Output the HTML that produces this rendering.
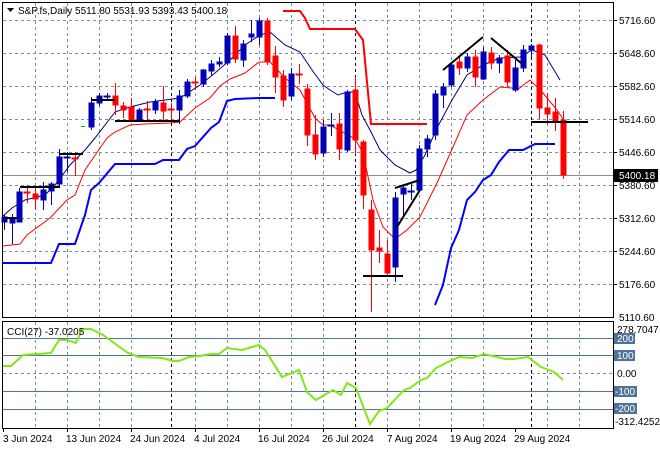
<!DOCTYPE html>
<html><head><meta charset="utf-8"><style>
html,body{margin:0;padding:0;background:#fff;}
svg{display:block;font-family:"Liberation Sans",sans-serif;font-size:10px;}
</style></head><body>
<svg width="660" height="450" viewBox="0 0 660 450" xmlns="http://www.w3.org/2000/svg">
<rect width="660" height="450" fill="#fff"/>
<!-- grid main -->
<g stroke="#7f8c99" stroke-width="1" stroke-dasharray="3,3" fill="none">
<path d="M3 20.5H613M3 53.5H613M3 86.5H613M3 119.5H613M3 152.5H613M3 185.5H613M3 218.5H613M3 251.5H613M3 284.5H613"/>
<path d="M35.5 3V317M67.5 3V317M99.5 3V317M131.5 3V317M195.5 3V317M227.5 3V317M259.5 3V317M291.5 3V317M323.5 3V317M387.5 3V317M419.5 3V317M451.5 3V317M483.5 3V317M547.5 3V317M579.5 3V317"/>
<path d="M35.5 322V428M67.5 322V428M99.5 322V428M131.5 322V428M195.5 322V428M227.5 322V428M259.5 322V428M291.5 322V428M323.5 322V428M387.5 322V428M419.5 322V428M451.5 322V428M483.5 322V428M547.5 322V428M579.5 322V428M3 373.5H613"/>
</g>
<g stroke="#000" stroke-width="1" stroke-dasharray="3,3">
<path d="M171.5 3V317M355.5 3V317M531.5 3V317M171.5 322V428M355.5 322V428M531.5 322V428"/>
</g>
<line x1="3" y1="175.5" x2="613" y2="175.5" stroke="#8a9099"/>
<!-- frames -->
<rect x="2.5" y="2.5" width="611" height="315" fill="none" stroke="#000"/>
<rect x="2.5" y="321.5" width="611" height="107" fill="none" stroke="#000"/>
<!-- CCI levels -->
<path d="M3 338.5H613M3 355.5H613M3 391.5H613M3 409.5H613" stroke="#4f7399" stroke-width="1"/>

<!-- blue channel -->
<polyline fill="none" stroke="#0000ff" stroke-width="2" points="3,263 51,263 59,244 75,244 85,215 91,190 99,183 115,164 155,164 163,160 179,160 187,149 195,146 211,128 219,122 227,101 235,99 259,98 275,98"/>
<polyline fill="none" stroke="#0000ff" stroke-width="2" points="435,305 443,285 451,248 459,230 467,200 475,192 483,180 491,175 499,162 509,150 523,150 531,146 535,144 555,144"/>
<!-- red channel -->
<polyline fill="none" stroke="#ff0000" stroke-width="2" points="283,11 300,11 305,18 310,29 355,29 363,40 371,124 427,124"/>
<!-- red MA -->
<polyline fill="none" stroke="#ff0000" stroke-width="1" points="3,246 20,244 27,235 50,218 67,200 75,195 85,170 100,148 107,138 115,132 130,125 145,124 170,123 180,122 195,108 210,98 220,86 230,79 245,73 259,62 270,62 285,78 300,90 315,118 323,125 330,125 355,139 363,153 373,200 383,227 395,239 407,230 420,217 437,183 453,147 467,115 483,100 500,87 512,88 517,90 530,80 543,93 557,110 565,122"/>
<!-- navy MA -->
<polyline fill="none" stroke="#000080" stroke-width="1" points="3,216 12,208 25,200 45,195 55,185 70,165 85,150 95,138 105,125 115,112 130,107 150,102 165,100 180,98 200,85 215,73 230,60 245,45 260,35 270,32 285,45 300,52 312,70 323,85 330,90 338,95 347,92 355,92 362,115 370,130 380,150 395,165 410,173 416,170 425,155 437,128 452,100 467,75 483,65 500,58 520,57 532,50 545,55 560,80"/>

<!-- candles -->
<g stroke-width="1">
<g stroke="#0000b4" fill="#0000b4">
<path d="M4.5 215V230M12.5 214V244M19.5 188V222M43.5 182V210M51.5 182V205M59.5 149V186M67.5 152V172M91.5 97V130M99.5 93V106M107.5 93V99M139.5 108V120M155.5 99V114M179.5 90V124M187.5 79V98M203.5 69V87M211.5 60V76M219.5 57V67M227.5 33V65M243.5 40V67M251.5 20V42M259.5 18V45M291.5 68V100M323.5 120V157M331.5 113V136M347.5 90V152M395.5 192V282M403.5 184V215M411.5 184V200M419.5 145V192M427.5 135V157M435.5 90V140M443.5 83V108M451.5 63V87M467.5 53V72M483.5 47V80M499.5 55V73M515.5 60V92M523.5 45V72M531.5 44V57"/>
<rect x="2" y="217" width="5" height="5"/><rect x="10" y="219" width="5" height="4"/><rect x="17" y="192" width="5" height="30"/><rect x="41" y="190" width="5" height="10"/><rect x="49" y="184" width="5" height="7"/><rect x="57" y="157" width="5" height="27"/><rect x="64" y="157" width="6" height="1"/><rect x="89" y="103" width="5" height="24"/><rect x="97" y="96" width="5" height="7"/><rect x="104" y="96" width="6" height="1"/><rect x="137" y="110" width="5" height="10"/><rect x="153" y="102" width="5" height="8"/><rect x="177" y="96" width="5" height="14"/><rect x="185" y="82" width="5" height="14"/><rect x="201" y="70" width="5" height="14"/><rect x="209" y="64" width="5" height="7"/><rect x="217" y="62" width="5" height="2"/><rect x="225" y="36" width="5" height="27"/><rect x="241" y="44" width="5" height="16"/><rect x="249" y="34" width="5" height="3"/><rect x="257" y="21" width="5" height="16"/><rect x="289" y="74" width="5" height="22"/><rect x="321" y="127" width="5" height="26"/><rect x="328" y="125" width="6" height="1"/><rect x="345" y="92" width="5" height="58"/><rect x="393" y="198" width="5" height="69"/><rect x="401" y="188" width="5" height="6"/><rect x="408" y="191" width="6" height="1"/><rect x="417" y="149" width="5" height="41"/><rect x="425" y="139" width="5" height="10"/><rect x="433" y="94" width="5" height="41"/><rect x="441" y="87" width="5" height="8"/><rect x="449" y="65" width="5" height="20"/><rect x="465" y="57" width="5" height="11"/><rect x="481" y="52" width="5" height="27"/><rect x="497" y="58" width="5" height="5"/><rect x="513" y="68" width="5" height="22"/><rect x="521" y="50" width="5" height="18"/><rect x="529" y="46" width="5" height="4"/>
</g>
<g stroke="#ff0000" fill="#ff0000">
<path d="M27.5 188V203M35.5 188V210M75.5 152V176M115.5 83V115M123.5 102V118M131.5 98V122M147.5 101V120M163.5 86V122M171.5 103V123M195.5 77V90M235.5 26V63M267.5 18V65M275.5 46V93M283.5 70V107M299.5 64V84M307.5 84V146M315.5 115V160M339.5 113V160M355.5 77V155M363.5 140V209M371.5 200V312M379.5 230V263M387.5 240V276M459.5 55V75M475.5 50V87M491.5 47V69M507.5 50V87M539.5 44V119M547.5 93V124M555.5 98V131M563.5 111V179"/>
<rect x="24" y="192" width="6" height="1"/><rect x="33" y="194" width="5" height="5"/><rect x="72" y="158" width="6" height="1"/><rect x="113" y="96" width="5" height="9"/><rect x="121" y="106" width="5" height="4"/><rect x="129" y="107" width="5" height="13"/><rect x="144" y="109" width="6" height="1"/><rect x="161" y="103" width="5" height="8"/><rect x="168" y="109" width="6" height="1"/><rect x="192" y="82" width="6" height="1"/><rect x="233" y="36" width="5" height="23"/><rect x="265" y="21" width="5" height="40"/><rect x="273" y="56" width="5" height="21"/><rect x="281" y="76" width="5" height="24"/><rect x="296" y="74" width="6" height="1"/><rect x="305" y="89" width="5" height="46"/><rect x="313" y="135" width="5" height="19"/><rect x="337" y="124" width="5" height="25"/><rect x="353" y="90" width="5" height="50"/><rect x="361" y="142" width="5" height="53"/><rect x="369" y="210" width="5" height="40"/><rect x="377" y="248" width="5" height="3"/><rect x="385" y="254" width="5" height="19"/><rect x="457" y="62" width="5" height="6"/><rect x="473" y="57" width="5" height="20"/><rect x="489" y="53" width="5" height="10"/><rect x="505" y="56" width="5" height="26"/><rect x="537" y="45" width="5" height="63"/><rect x="545" y="108" width="5" height="6"/><rect x="553" y="112" width="5" height="9"/><rect x="561" y="120" width="5" height="55"/>
</g>
<path d="M81 126.5H85" stroke="#00c000"/>
</g>
<!-- black lines -->
<g stroke="#000" stroke-width="2" fill="none">
<path d="M3 218H17M20 187H60M59 154H83M91 100H115M115 121H180M363 276H403M397 227L420 190M395 188L420 180M443 70L483 37M491 38L521 63M531 122H588"/>
</g>

<!-- CCI line -->
<polyline fill="none" stroke="#7fe817" stroke-width="2" points="3,366 11,366 23,355 51,353 59,340 67,340 76,343 82,329 91,329 103,335 114,343 128,353 139,357 162,358 173,361 179,361 189,357 200,356 210,354 219,354 227,348 242,350 259,345 265,350 282,377 299,370 307,392 316,400 333,390 341,395 347,383 356,388 370,424 379,411 387,408 404,390 410,388 421,380 427,378 436,368 446,363 459,357 472,358 484,354 505,359 514,359 528,357 541,367 554,372 563,380"/>

<!-- header text -->
<path d="M7 8H14L10.5 12Z" fill="#000"/>
<text x="18" y="14" fill="#000">S&amp;P.fs,Daily  5511.80 5531.93 5393.43 5400.18</text>
<text x="7" y="335" fill="#000">CCI(27) -37.0205</text>

<!-- price axis -->
<g fill="#000">
<text x="619" y="24">5716.60</text>
<text x="619" y="57">5648.60</text>
<text x="619" y="90">5582.60</text>
<text x="619" y="123">5514.60</text>
<text x="619" y="156">5446.60</text>
<text x="619" y="189">5380.60</text>
<text x="619" y="222">5312.60</text>
<text x="619" y="255">5244.60</text>
<text x="619" y="288">5176.60</text>
<text x="619" y="321">5110.60</text>
</g>
<rect x="614" y="169" width="44" height="13" fill="#000"/>
<text x="619" y="179" fill="#fff">5400.18</text>
<g stroke="#000"><path d="M613 20.5H617M613 53.5H617M613 86.5H617M613 119.5H617M613 152.5H617M613 185.5H617M613 218.5H617M613 251.5H617M613 284.5H617"/></g>
<!-- CCI axis -->
<text x="617" y="333" fill="#000">278.7047</text>
<g fill="#4f7399"><rect x="614" y="333" width="21" height="11"/><rect x="614" y="350" width="21" height="11"/><rect x="614" y="386" width="23" height="11"/><rect x="614" y="403" width="23" height="11"/></g>
<g fill="#fff"><text x="617" y="342">200</text><text x="617" y="359">100</text><text x="615" y="395">-100</text><text x="615" y="412">-200</text></g>
<text x="617" y="377" fill="#000">0.00</text>
<text x="615" y="425" fill="#000">-312.4252</text>
<!-- dates -->
<g fill="#000">
<text x="3" y="442">3 Jun 2024</text>
<text x="66" y="442">13 Jun 2024</text>
<text x="130" y="442">24 Jun 2024</text>
<text x="194" y="442">4 Jul 2024</text>
<text x="258" y="442">16 Jul 2024</text>
<text x="322" y="442">26 Jul 2024</text>
<text x="387" y="442">7 Aug 2024</text>
<text x="450" y="442">19 Aug 2024</text>
<text x="514" y="442">29 Aug 2024</text>
</g>
<g stroke="#000"><path d="M3.5 428V432M67.5 428V432M131.5 428V432M195.5 428V432M259.5 428V432M323.5 428V432M387.5 428V432M451.5 428V432M515.5 428V432"/></g>
</svg>
</body></html>
